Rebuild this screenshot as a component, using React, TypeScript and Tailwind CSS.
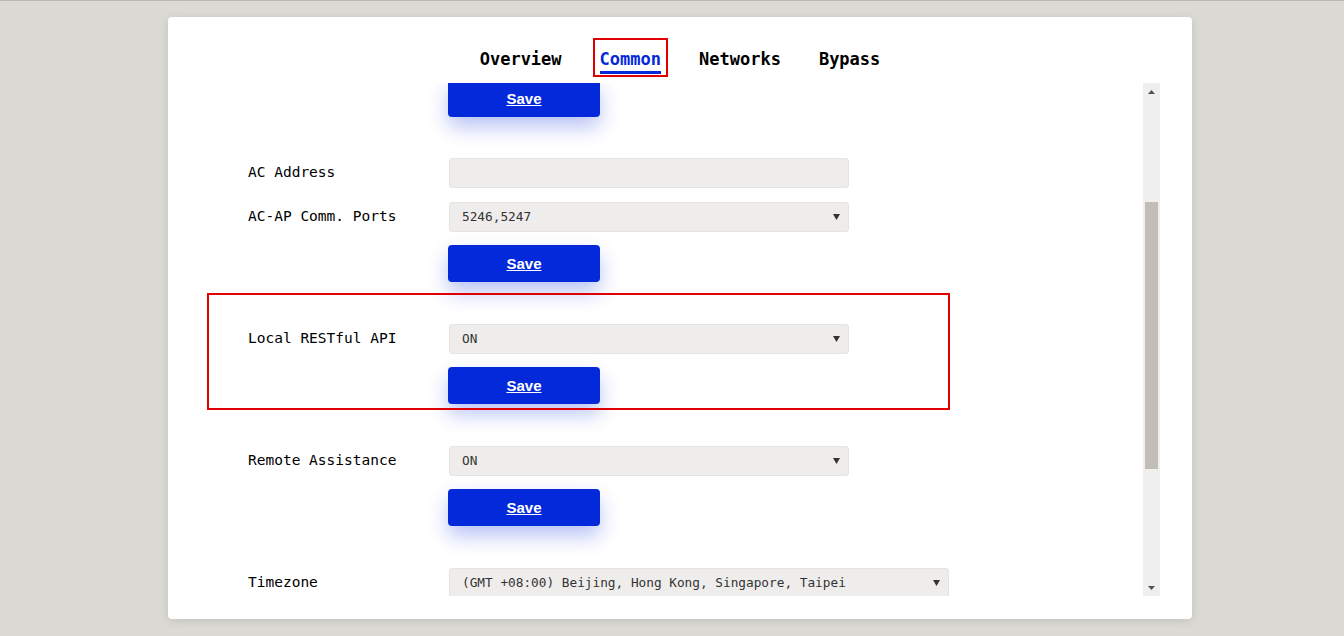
import React from "react";

const mono = { fontFamily: '"DejaVu Sans Mono", "Liberation Mono", monospace' };

function Arrow() {
  return (
    <svg width="7" height="6" viewBox="0 0 7 6" className="shrink-0">
      <path d="M0 0 H7 L3.5 6 Z" fill="#333" />
    </svg>
  );
}

function SaveBtn({ className = "" }: { className?: string }) {
  return (
    <button
      className={
        "ml-[200px] w-[152px] h-[37px] pt-[2px] shrink-0 rounded-[4px] bg-[#0429db] text-white font-bold underline text-[15px] shadow-[0_10px_20px_rgba(4,41,219,0.28)] " +
        className
      }
      style={{ fontFamily: '"Liberation Sans", Arial, sans-serif' }}
    >
      Save
    </button>
  );
}

function Field({ label, value, wide = false, select = true }: { label: string; value?: string; wide?: boolean; select?: boolean }) {
  return (
    <div className="flex items-center">
      <div className="w-[201px] text-[14.5px] text-black" style={mono}>
        {label}
      </div>
      <div
        className={
          (wide ? "w-[500px]" : "w-[400px]") +
          " h-[30px] shrink-0 flex items-center justify-between pl-[12px] pr-[8px] rounded-[3px] bg-[#eeedeb] border border-[#e6e4e1] text-[12.75px] text-[#333]"
        }
        style={mono}
      >
        <span>{value}</span>
        {select && <Arrow />}
      </div>
    </div>
  );
}

export default function App() {
  const tabs = ["Overview", "Common", "Networks", "Bypass"];
  return (
    <div className="w-[1344px] h-[636px] bg-[#dcdad5] border-t border-[#bdb8b3] overflow-hidden">
      <div className="ml-[168px] mt-[16px] w-[1024px] h-[602px] bg-white rounded-[4px] shadow-[0_2px_10px_rgba(0,0,0,0.12)] flex flex-col">
        {/* tabs */}
        <div className="h-[66px] flex justify-center gap-[24px] pt-[21px]">
          {tabs.map((t) => {
            const active = t === "Common";
            return (
              <div
                key={t}
                className={
                  "h-[39px] flex flex-col items-center px-[5px] pt-[9px] border-2 " +
                  (active ? "border-[#e00000]" : "border-transparent")
                }
              >
                <span
                  className={"text-[17px] leading-[20px] font-bold " + (active ? "text-[#0429db]" : "text-black")}
                  style={mono}
                >
                  {t}
                </span>
                <span className={"mt-[2px] h-[3px] self-stretch " + (active ? "bg-[#0429db]" : "bg-transparent")} />
              </div>
            );
          })}
        </div>

        {/* scroll region */}
        <div className="flex h-[513px] pr-[32px]">
          <div className="flex-1 overflow-hidden pl-[80px]">
            <div className="-mt-[3px] flex flex-col">
              <SaveBtn />

              <div className="mt-[41px] flex flex-col gap-[14px]">
                <Field label="AC Address" select={false} />
                <Field label="AC-AP Comm. Ports" value="5246,5247" />
              </div>
              <SaveBtn className="mt-[13px]" />

              <div className="relative mt-[42px] flex flex-col">
                <div className="absolute left-[-41px] top-[-31px] w-[743px] h-[117px] border-2 border-[#e00000] pointer-events-none" />
                <Field label="Local RESTful API" value="ON" />
                <SaveBtn className="mt-[13px]" />
              </div>

              <div className="mt-[42px] flex flex-col">
                <Field label="Remote Assistance" value="ON" />
                <SaveBtn className="mt-[13px]" />
              </div>

              <div className="mt-[42px] flex flex-col">
                <Field label="Timezone" value="(GMT +08:00) Beijing, Hong Kong, Singapore, Taipei" wide />
              </div>
            </div>
          </div>

          {/* scrollbar */}
          <div className="w-[17px] bg-[#f0efee] flex flex-col items-center">
            <div className="h-[17px] flex items-center justify-center">
              <svg width="7" height="4" viewBox="0 0 7 4">
                <path d="M0 4 L3.5 0 L7 4 Z" fill="#505050" />
              </svg>
            </div>
            <div className="mt-[102px] w-[13px] h-[267px] bg-[#c1bdb7]" />
            <div className="flex-1" />
            <div className="h-[17px] flex items-center justify-center">
              <svg width="7" height="4" viewBox="0 0 7 4">
                <path d="M0 0 L7 0 L3.5 4 Z" fill="#505050" />
              </svg>
            </div>
          </div>
        </div>
      </div>
    </div>
  );
}
